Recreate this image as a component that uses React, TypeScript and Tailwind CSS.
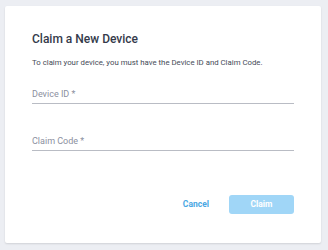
export default function App() {
  return (
    <div className="h-[250px] w-[328px] bg-[#eceef3] pt-[6px] pl-[5px] font-['Roboto',sans-serif]">
      <div className="flex h-[237px] w-[316px] flex-col rounded-[2px] bg-white pl-[27px] pr-[27px] shadow-[0_1px_2px_rgba(0,0,0,0.12)]">
        <h2 className="mt-[25px] text-[12px] font-medium leading-[16px] text-[#343a4a]">Claim a New Device</h2>
        <p className="mt-[10px] text-[7.8px] leading-[12px] text-[#454a57]">
          To claim your device, you must have the Device ID and Claim Code.
        </p>

        <div className="mt-[19px] border-b-[1.5px] border-[#b9bcc4] pb-[3px]">
          <span className="block text-[9px] leading-[12px] text-[#8b90a0]">Device ID *</span>
        </div>
        <div className="mt-[31px] border-b-[1.5px] border-[#b9bcc4] pb-[3px]">
          <span className="block text-[9px] leading-[12px] text-[#8b90a0]">Claim Code *</span>
        </div>

        <div className="mt-[44px] flex items-center justify-end gap-[20px]">
          <button className="h-[19px] text-[8.5px] font-bold text-[#4aa7e3]">Cancel</button>
          <button className="h-[19px] w-[65px] rounded-[3px] bg-[#a0d6f7] text-[8.5px] font-bold text-white">Claim</button>
        </div>
      </div>
    </div>
  );
}
